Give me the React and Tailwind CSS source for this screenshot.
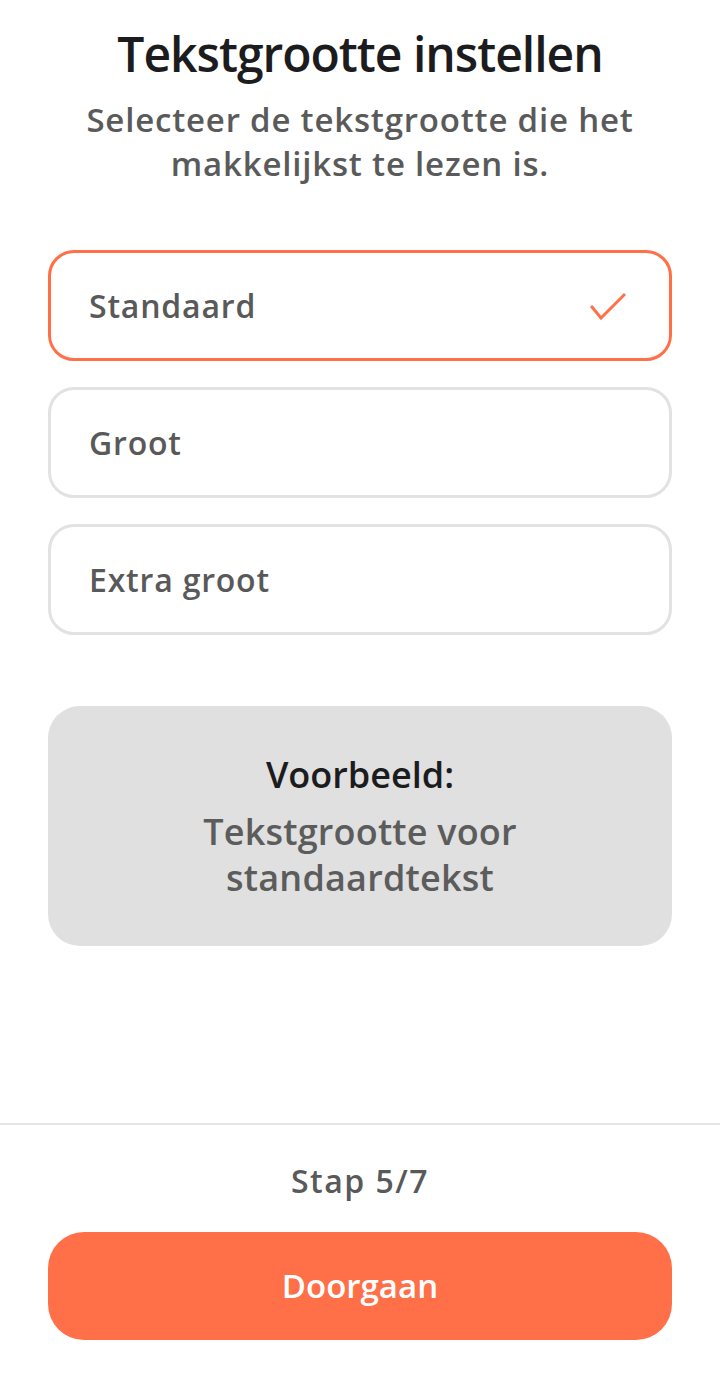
import React, { useState } from 'react';

const options = ['Standaard', 'Groot', 'Extra groot'];

const CheckIcon = () => (
  <svg width="36" height="28" viewBox="0 0 36 28" fill="none">
    <polyline
      points="2,15 11,26 34,3"
      stroke="#ff7049"
      strokeWidth="3"
      strokeLinecap="square"
      strokeLinejoin="miter"
    />
  </svg>
);

const App = () => {
  const [selected, setSelected] = useState('Standaard');

  return (
    <div className="h-[1388px] w-full bg-white flex flex-col font-['Open_Sans',sans-serif]">
      <main className="flex-1 px-12">
        <h1 className="pt-[26px] text-center text-[48px] leading-[56px] font-semibold tracking-[-1px] text-[#1c1c1e]">
          Tekstgrootte instellen
        </h1>
        <p className="mt-4 text-center text-[33px] leading-[44px] font-semibold tracking-[0.8px] text-[#5a5a5a]">
          Selecteer de tekstgrootte die het makkelijkst te lezen is.
        </p>

        <div className="mt-16 flex flex-col gap-[26px]">
          {options.map((option) => {
            const active = option === selected;
            return (
              <button
                key={option}
                type="button"
                onClick={() => setSelected(option)}
                className={
                  active
                    ? 'h-[111px] flex items-center justify-between pl-[38px] pr-[43px] rounded-[26px] border-[3px] border-[#ff7049] bg-white'
                    : 'h-[111px] flex items-center justify-between pl-[38px] pr-[43px] rounded-[26px] border-[3px] border-[#e2e2e2] bg-white'
                }
              >
                <span className="text-[32px] leading-[40px] font-semibold tracking-[0.8px] text-[#595959]">
                  {option}
                </span>
                {active && <CheckIcon />}
              </button>
            );
          })}
        </div>

        <div className="mt-[71px] h-[240px] rounded-[32px] bg-[#e0e0e0] flex flex-col items-center justify-center">
          <span className="text-[36px] leading-[46px] font-semibold text-[#1c1c1e]">
            Voorbeeld:
          </span>
          <p className="mt-[11px] text-center text-[36px] leading-[46px] font-semibold tracking-[0.2px] text-[#5c5c5c]">
            Tekstgrootte voor
            <br />
            standaardtekst
          </p>
        </div>
      </main>

      <footer className="border-t-2 border-[#e5e5e5] px-12 pt-[36px] pb-12">
        <p className="text-center text-[32px] leading-[40px] font-semibold tracking-[1.5px] text-[#595959]">
          Stap 5/7
        </p>
        <button
          type="button"
          className="mt-[31px] w-full h-[108px] rounded-[36px] bg-[#ff7049] text-white text-[33px] font-semibold"
        >
          Doorgaan
        </button>
      </footer>
    </div>
  );
};

export default App;
